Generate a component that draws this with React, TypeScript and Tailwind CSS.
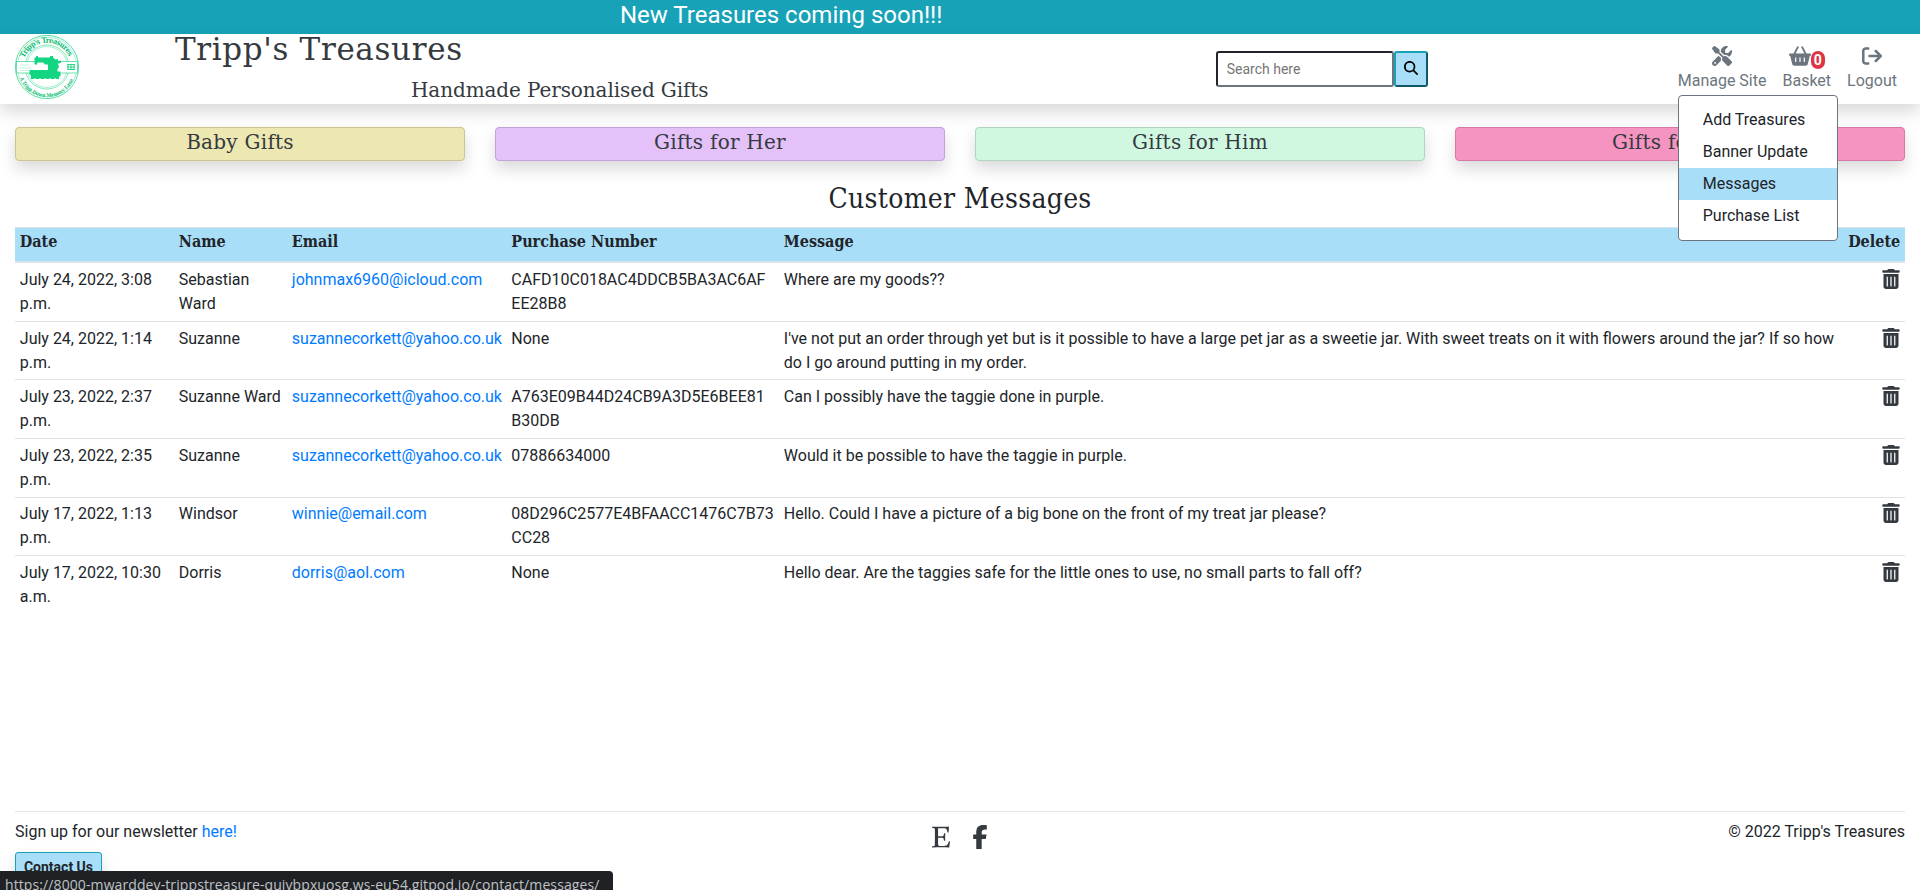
import React from "react";
import {
  FaScrewdriverWrench,
  FaBasketShopping,
  FaArrowRightFromBracket,
  FaTrashCan,
  FaEtsy,
  FaFacebookF,
  FaMagnifyingGlass,
} from "react-icons/fa6";

const categories = [
  { label: "Baby Gifts", color: "bg-[#ede7b1] border-[#cbc58f]" },
  { label: "Gifts for Her", color: "bg-[#e4c1f9] border-[#c4a3d8]" },
  { label: "Gifts for Him", color: "bg-[#d0f7e0] border-[#b0d6c0]" },
  { label: "Gifts for Pets", color: "bg-[#f694c1] border-[#d67aa5]" },
];

const messages = [
  { date: "July 24, 2022, 3:08 p.m.", name: "Sebastian Ward", email: "johnmax6960@icloud.com", order: "CAFD10C018AC4DDCB5BA3AC6AF\nEE28B8", text: "Where are my goods??" },
  { date: "July 24, 2022, 1:14 p.m.", name: "Suzanne", email: "suzannecorkett@yahoo.co.uk", order: "None", text: "I've not put an order through yet but is it possible to have a large pet jar as a sweetie jar. With sweet treats on it with flowers around the jar? If so how do I go around putting in my order." },
  { date: "July 23, 2022, 2:37 p.m.", name: "Suzanne Ward", email: "suzannecorkett@yahoo.co.uk", order: "A763E09B44D24CB9A3D5E6BEE81\nB30DB", text: "Can I possibly have the taggie done in purple." },
  { date: "July 23, 2022, 2:35 p.m.", name: "Suzanne", email: "suzannecorkett@yahoo.co.uk", order: "07886634000", text: "Would it be possible to have the taggie in purple." },
  { date: "July 17, 2022, 1:13 p.m.", name: "Windsor", email: "winnie@email.com", order: "08D296C2577E4BFAACC1476C7B73\nCC28", text: "Hello. Could I have a picture of a big bone on the front of my treat jar please?" },
  { date: "July 17, 2022, 10:30 a.m.", name: "Dorris", email: "dorris@aol.com", order: "None", text: "Hello dear. Are the taggies safe for the little ones to use, no small parts to fall off?" },
];

const menuItems = ["Add Treasures", "Banner Update", "Messages", "Purchase List"];

function Logo() {
  return (
    <svg viewBox="0 0 66 66" className="h-[66px] w-[66px] shrink-0" fill="none" stroke="#2fd68b">
      <circle cx="33" cy="33" r="31.6" strokeWidth="0.8" />
      <circle cx="33" cy="33" r="29.8" strokeWidth="0.6" opacity="0.7" />
      <circle cx="33" cy="33" r="22" strokeWidth="0.6" />
      <circle cx="33" cy="33" r="20.4" strokeWidth="0.6" opacity="0.7" />
      <rect x="2.5" y="27.5" width="61" height="11.5" fill="#fff" strokeWidth="0.7" />
      <path d="M6 31h9M4.500 34h13M6 36.500h9" strokeWidth="0.5" opacity="0.55" />
      <path d="M53 30.500h8M53 33h8M53 35.500h8M54 30v6M57 30v6M60 30v6" strokeWidth="1.1" />
      <path
        d="M20.500 23.500h1.500v-1.500h2v1.500H36v-1.500h3v1.500l2.500 2 2.500-.5v2l3-.5v2.500l-3 .5 1 3.500-1.500 2v2.500h3v5h-1.500v2.500h-3l-1-1-1 1h-3l-1-1-1 1h-3l-1-1-1 1h-3l-1-1-1 1h-3l-1-1-1 1h-3V41h-1.500v-5H34v-5.500h-3l-2-2h-5.500l-.5 2h-2.500z"
        fill="#14d581"
        stroke="none"
      />
      <path id="logo-top" d="M10.500 24 A24.200 24.200 0 0 1 55.500 24" stroke="none" />
      <path id="logo-bottom" d="M5.800 43 A28.500 28.500 0 0 0 60.200 43" stroke="none" />
      <text fill="#0cbd70" stroke="none" className="text-[7.5px] font-bold font-['DejaVu_Serif_Condensed','DejaVu_Serif']">
        <textPath href="#logo-top" textLength="56" startOffset="0">Tripp's Treasures</textPath>
      </text>
      <text fill="#0cbd70" stroke="none" className="text-[5px] font-bold font-['DejaVu_Serif_Condensed','DejaVu_Serif']">
        <textPath href="#logo-bottom" textLength="68" startOffset="1">A Tripp Down Memory Lane</textPath>
      </text>
    </svg>
  );
}

const slab = "font-['DejaVu_Serif',serif]";
const slabNarrow = "font-['DejaVu_Serif_Condensed','DejaVu_Serif',serif] [font-stretch:condensed]";

export default function App() {
  return (
    <div className="relative flex h-[890px] w-full flex-col overflow-hidden bg-white font-[Roboto,sans-serif] text-base leading-6 text-[#212529]">
      <div className="h-[34px] shrink-0 bg-[#17a2b8] pl-[620px] text-2xl leading-[30px] text-white">
        New Treasures coming soon!!!
      </div>

      <header className="relative z-10 flex h-[70px] shrink-0 items-start bg-white pl-[14px] shadow-[0_8px_16px_rgba(0,0,0,0.15)]">
        <Logo />
        <div className={`w-[635px] pl-[95px] text-[#343a40] ${slab}`}>
          <h1 className="h-[38px] text-[31px] leading-[31px] tracking-[0.65px] whitespace-nowrap">Tripp's Treasures</h1>
          <p className="pl-[236px] text-xl leading-9 tracking-[-0.1px] whitespace-nowrap">Handmade Personalised Gifts</p>
        </div>
        <form className="ml-auto mt-[17px] flex h-9">
          <input
            placeholder="Search here"
            className="w-[178px] rounded-[3px] border-2 border-t-[#212529] border-r-[#6c757d] border-b-[#6c757d] border-l-[#212529] pr-2 pb-px pl-[9px] text-sm placeholder:text-[#757575]"
          />
          <button
            type="button"
            className="flex w-[34px] items-center justify-center rounded-[3px] border-2 border-t-[#17a2b8] border-r-[#0f5a66] border-b-[#0f5a66] border-l-[#17a2b8] bg-[#a9def9] pb-0.5 text-black"
          >
            <FaMagnifyingGlass size={14} />
          </button>
        </form>
        <nav className="ml-[250px] flex gap-4 pr-[23px] pt-3 text-[#6c757d]">
          <div className="relative flex flex-col items-center">
            <FaScrewdriverWrench size={20} />
            <span className="mt-[3px] whitespace-nowrap">Manage Site</span>
            <ul className="absolute left-0 top-[49px] h-[146px] w-40 rounded border border-[#6c757d] bg-white py-2 text-[#212529]">
              {menuItems.map((item) => (
                <li key={item} className={`h-8 px-6 py-1 whitespace-nowrap ${item === "Messages" ? "bg-[#a9def9]" : ""}`}>
                  {item}
                </li>
              ))}
            </ul>
          </div>
          <div className="flex flex-col items-center">
            <div className="flex h-5">
              <FaBasketShopping size={22} className="-mt-px" />
              <span className="mt-[5px] flex h-[18px] w-3.5 items-center justify-center rounded-full bg-[#dc3545] text-sm font-bold text-white">0</span>
            </div>
            <span className="mt-[3px]">Basket</span>
          </div>
          <div className="flex flex-col items-center">
            <FaArrowRightFromBracket size={20} />
            <span className="mt-[3px]">Logout</span>
          </div>
        </nav>
      </header>

      <div className="mx-[15px] mt-[23px] grid grid-cols-4 gap-[30px]">
        {categories.map((c) => (
          <div
            key={c.label}
            className={`h-[34px] rounded border text-center text-xl leading-7 tracking-[0.25px] text-[#343a40] shadow-[0_8px_16px_rgba(0,0,0,0.15)] ${slab} ${c.color}`}
          >
            {c.label}
          </div>
        ))}
      </div>

      <h2 className={`mt-[19px] h-[46.6px] text-center text-[28px] leading-[38px] tracking-[0.3px] ${slabNarrow}`}>Customer Messages</h2>

      <table className="mx-[15px] w-[1890px] table-fixed border-collapse">
        <colgroup>
          <col className="w-[159px]" />
          <col className="w-[113px]" />
          <col className="w-[219.5px]" />
          <col className="w-[272.5px]" />
          <col />
          <col className="w-[64px]" />
        </colgroup>
        <thead>
          <tr className={`border-t border-b-2 border-[#dee2e6] bg-[#a9def9] text-left ${slabNarrow}`}>
            {["Date", "Name", "Email", "Purchase Number", "Message", "Delete"].map((h) => (
              <th key={h} className={`px-[4.8px] pt-[2.8px] pb-[6.8px] text-base leading-6 font-bold whitespace-nowrap ${h === "Delete" ? "text-right" : ""}`}>
                {h}
              </th>
            ))}
          </tr>
        </thead>
        <tbody>
          {messages.map((m) => (
            <tr key={m.date} className="border-t border-[#dee2e6] align-top first:border-t-0">
              <td className="p-[4.8px]">{m.date}</td>
              <td className="p-[4.8px]">{m.name}</td>
              <td className="p-[4.8px] text-[#007bff]">{m.email}</td>
              <td className="p-[4.8px] whitespace-pre">{m.order}</td>
              <td className="p-[4.8px]">{m.text}</td>
              <td className="p-[4.8px]">
                <FaTrashCan size={20} className="mt-px -mr-px ml-auto text-[#343a40]" />
              </td>
            </tr>
          ))}
        </tbody>
      </table>

      <footer className="absolute inset-x-[15px] top-[811px] grid grid-cols-3 border-t border-[#e5e5e5] pt-2">
        <div>
          <p>
            Sign up for our newsletter <a className="text-[#007bff]">here!</a>
          </p>
          <button
            type="button"
            className="mt-2 h-[31px] w-[87px] rounded-[3px] border border-[#17a2b8] bg-[#a9def9] pb-0.5 text-sm font-bold whitespace-nowrap shadow-[0_8px_16px_rgba(0,0,0,0.15)]"
          >
            Contact Us
          </button>
        </div>
        <div className="flex justify-center gap-[15px] pt-[5px] pl-px text-[#343a40]">
          <FaEtsy size={24} />
          <FaFacebookF size={24} />
        </div>
        <p className="text-right">© 2022 Tripp's Treasures</p>
      </footer>

      <div className="absolute bottom-0 left-0 h-[19px] w-[613px] overflow-hidden rounded-tr bg-[#202124] pl-[5px] text-[14px] leading-[27px] tracking-[0.1px] whitespace-nowrap text-[#bdc1c6] font-['Open_Sans',sans-serif]">
        https://8000-mwarddev-trippstreasure-quivbpxuosg.ws-eu54.gitpod.io/contact/messages/
      </div>
    </div>
  );
}
